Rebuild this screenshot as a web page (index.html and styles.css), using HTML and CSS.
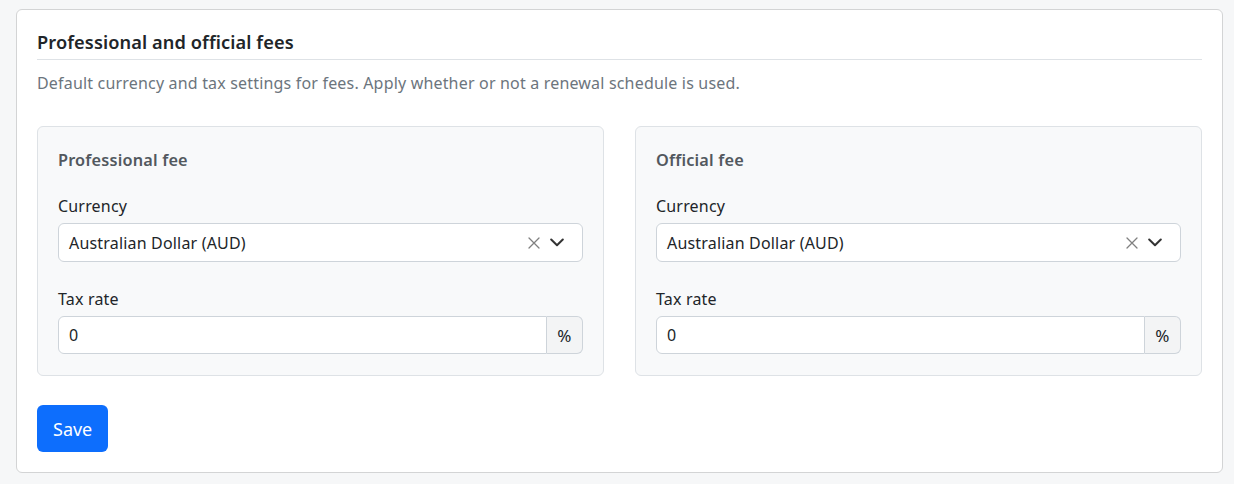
FILE: index.html
```html
<!DOCTYPE html>
<html lang="en">
<head>
<meta charset="utf-8">
<title>Fees</title>
<link rel="stylesheet" href="styles.css">
</head>
<body>
<div class="page">
  <section class="card">
    <h2 class="card-title">Professional and official fees</h2>
    <p class="desc">Default currency and tax settings for fees. Apply whether or not a renewal schedule is used.</p>
    <div class="grid">
      <div class="sub">
        <h3 class="sub-title">Professional fee</h3>
        <label class="label">Currency</label>
        <div class="select">
          <span class="select-value">Australian Dollar (AUD)</span>
          <span class="ind clear"><svg width="12" height="12" viewBox="0 0 12 12"><path d="M1 1l10 10M11 1L1 11" fill="none" stroke="currentColor" stroke-width="1.3" stroke-linecap="round"/></svg></span>
          <span class="ind drop"><svg width="14" height="9" viewBox="0 0 14 9"><path d="M1.2 1.5l5.8 5.8 5.8-5.8" fill="none" stroke="currentColor" stroke-width="2" stroke-linecap="round" stroke-linejoin="round"/></svg></span>
        </div>
        <label class="label label-2">Tax rate</label>
        <div class="input-group">
          <input class="input" type="text" value="0">
          <span class="addon">%</span>
        </div>
      </div>
      <div class="sub">
        <h3 class="sub-title">Official fee</h3>
        <label class="label">Currency</label>
        <div class="select">
          <span class="select-value">Australian Dollar (AUD)</span>
          <span class="ind clear"><svg width="12" height="12" viewBox="0 0 12 12"><path d="M1 1l10 10M11 1L1 11" fill="none" stroke="currentColor" stroke-width="1.3" stroke-linecap="round"/></svg></span>
          <span class="ind drop"><svg width="14" height="9" viewBox="0 0 14 9"><path d="M1.2 1.5l5.8 5.8 5.8-5.8" fill="none" stroke="currentColor" stroke-width="2" stroke-linecap="round" stroke-linejoin="round"/></svg></span>
        </div>
        <label class="label label-2">Tax rate</label>
        <div class="input-group">
          <input class="input" type="text" value="0">
          <span class="addon">%</span>
        </div>
      </div>
    </div>
    <button class="btn" type="button">Save</button>
  </section>
</div>
</body>
</html>
```
FILE: styles.css
```css
* { box-sizing: border-box; }
html, body { margin: 0; padding: 0; }
body {
  background: #f6f7f8;
  font-family: "Noto Sans", "Segoe UI", sans-serif;
  color: #212529;
  font-size: 16px;
  letter-spacing: 0.18px;
}
.page { padding: 9px 11px 12px 16px; }
.card {
  background: #fff;
  border: 1px solid #d3d4d5;
  border-radius: 6px;
  padding: 18px 20px 20px 20px;
}
.card-title {
  margin: 0;
  font-size: 18.2px;
  font-weight: 600;
  line-height: 28px;
  padding-bottom: 3px;
  border-bottom: 1px solid #dee2e6;
  letter-spacing: 0.1px;
}
.desc {
  margin: 11px 0 0;
  color: #6c757d;
  line-height: 24px;
}
.grid {
  display: grid;
  grid-template-columns: 1fr 1fr;
  gap: 31px;
  margin-top: 31px;
}
.sub {
  background: #f8f9fa;
  border: 1px solid #dee2e6;
  border-radius: 6px;
  padding: 21px 20px 21px 20px;
}
.sub-title {
  margin: 0;
  font-size: 16.3px;
  font-weight: 600;
  color: #52585e;
  line-height: 24px;
}
.label { display: block; margin-top: 22px; line-height: 24px; margin-bottom: 5px; }
.label-2 { margin-top: 25px; }
.select {
  display: flex;
  align-items: center;
  height: 39px;
  background: #fff;
  border: 1px solid #ced4da;
  border-radius: 6px;
  padding: 0 18px 0 10px;
}
.select-value { flex: 1; }
.ind { display: flex; align-items: center; }
.clear { color: #808080; margin-right: 10px; }
.drop { color: #333; }
.input-group { display: flex; height: 38px; }
.input {
  flex: 1;
  min-width: 0;
  border: 1px solid #ced4da;
  border-radius: 6px 0 0 6px;
  padding: 0 10px;
  font: inherit;
  color: #212529;
  background: #fff;
}
.addon {
  display: flex;
  align-items: center;
  justify-content: center;
  width: 36px;
  background: #f3f4f5;
  border: 1px solid #ced4da;
  border-left: 0;
  border-radius: 0 6px 6px 0;
  font-size: 17px;
}
.btn {
  margin-top: 29px;
  background: #0d6efd;
  color: #fff;
  border: 0;
  border-radius: 6px;
  font: inherit;
  font-size: 18px;
  height: 47px;
  padding: 0 16px;
  display: block;
}
```
